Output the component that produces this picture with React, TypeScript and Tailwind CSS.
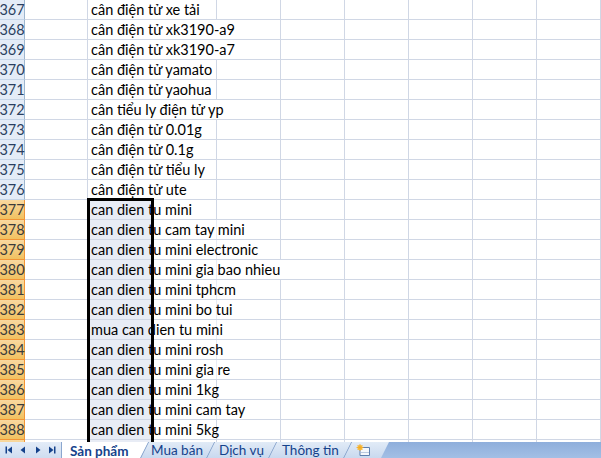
import React from 'react';

const rows: { n: number; text: string; ov?: boolean }[] = [
    { n: 367, text: 'cân điện tử xe tải' },
    { n: 368, text: 'cân điện tử xk3190-a9', ov: true },
    { n: 369, text: 'cân điện tử xk3190-a7', ov: true },
    { n: 370, text: 'cân điện tử yamato' },
    { n: 371, text: 'cân điện tử yaohua' },
    { n: 372, text: 'cân tiểu ly điện tử yp', ov: true },
    { n: 373, text: 'cân điện tử 0.01g' },
    { n: 374, text: 'cân điện tử 0.1g' },
    { n: 375, text: 'cân điện tử tiểu ly' },
    { n: 376, text: 'cân điện tử ute' },
    { n: 377, text: 'can dien tu mini' },
    { n: 378, text: 'can dien tu cam tay mini', ov: true },
    { n: 379, text: 'can dien tu mini electronic', ov: true },
    { n: 380, text: 'can dien tu mini gia bao nhieu', ov: true },
    { n: 381, text: 'can dien tu mini tphcm', ov: true },
    { n: 382, text: 'can dien tu mini bo tui', ov: true },
    { n: 383, text: 'mua can dien tu mini', ov: true },
    { n: 384, text: 'can dien tu mini rosh', ov: true },
    { n: 385, text: 'can dien tu mini gia re', ov: true },
    { n: 386, text: 'can dien tu mini 1kg' },
    { n: 387, text: 'can dien tu mini cam tay', ov: true },
    { n: 388, text: 'can dien tu mini 5kg' },
    { n: 389, text: '' },
];

const NavIcon = ({ kind }: { kind: 'first' | 'prev' | 'next' | 'last' }) => (
    <svg width="8" height="8" viewBox="0 0 8 8" className="fill-[#15428b]">
        {kind === 'first' && (<><rect x="0.5" y="0.5" width="1.5" height="7" /><polygon points="7,0.5 2.5,4 7,7.5" /></>)}
        {kind === 'prev' && <polygon points="6,0.5 1.5,4 6,7.5" />}
        {kind === 'next' && <polygon points="2,0.5 6.5,4 2,7.5" />}
        {kind === 'last' && (<><polygon points="1,0.5 5.5,4 1,7.5" /><rect x="6" y="0.5" width="1.5" height="7" /></>)}
    </svg>
);

// the "/" edge line drawn on the left side of each sheet tab
const Slash = () => (
    <svg width="9" height="16" viewBox="0 0 9 16" className="absolute left-0 top-0">
        <path d="M0.5 16L8.5 0" stroke="#7f9dc8" strokeWidth="1" />
    </svg>
);

const tabClass = 'relative -ml-[8px] bg-gradient-to-b from-[#e1ebf7] to-[#c9d9ef] text-[#15428b]';

export default function App() {
    return (
        <div className="w-[601px] h-[458px] overflow-hidden bg-white flex flex-col" style={{ fontFamily: 'Lato, "Open Sans", sans-serif' }}>
            {/* sheet grid */}
            <div className="relative h-[442px] overflow-hidden">
                {rows.map((r) => {
                    const sel = r.n >= 377;
                    return (
                        <div key={r.n} className="flex h-[20px] border-b border-[#d0d7e5]">
                            <div
                                className={
                                    sel
                                        ? 'w-[25px] shrink-0 flex items-center justify-center text-[14.5px] text-[#3b3b3b] bg-gradient-to-b from-[#f9d99f] to-[#f1c15f] border-r border-[#f29536] border-b border-b-[#f29536] -mb-px'
                                        : 'w-[25px] shrink-0 flex items-center justify-center text-[14.5px] text-[#2a3f5f] bg-[#e4ecf7] border-r border-[#9eb6ce] border-b border-b-[#c5d5e8] -mb-px'
                                }
                            >
                                {r.n}
                            </div>
                            <div className="w-[63px] shrink-0 border-r border-[#d0d7e5]" />
                            <div
                                className={
                                    (r.ov ? 'border-r-transparent ' : 'border-r-[#d0d7e5] ') +
                                    (sel
                                        ? 'bg-[linear-gradient(90deg,#e8ecf5_0,#e8ecf5_64px,transparent_64px)] '
                                        : '') +
                                    'w-[129px] shrink-0 border-r relative'
                                }
                            >
                                <span className="absolute left-[3px] top-[1px] whitespace-nowrap text-[14.5px] leading-[18px] text-black">
                                    {r.text}
                                </span>
                            </div>
                            <div className={(r.n === 380 ? 'border-r-transparent ' : 'border-r-[#d0d7e5] ') + 'w-[64px] shrink-0 border-r'} />
                            <div className="w-[64px] shrink-0 border-r border-[#d0d7e5]" />
                            <div className="w-[64px] shrink-0 border-r border-[#d0d7e5]" />
                            <div className="w-[64px] shrink-0 border-r border-[#d0d7e5]" />
                            <div className="w-[64px] shrink-0 border-r border-[#d0d7e5]" />
                            <div className="w-[64px] shrink-0 border-r border-[#d0d7e5]" />
                        </div>
                    );
                })}
                {/* selection border */}
                <div className="absolute left-[87px] top-[198px] w-[67px] h-[260px] border-[3px] border-black pointer-events-none" />
            </div>

            {/* sheet tabs */}
            <div className="h-[16px] flex items-stretch bg-gradient-to-b from-[#8eaedb] to-[#a3bfe5] text-[13.5px] leading-[16px]">
                <div className="w-[62px] shrink-0 flex items-center justify-around px-[2px] bg-gradient-to-b from-[#e3ecf8] to-[#cfddf0] border-r border-[#8ba7cf]">
                    <NavIcon kind="first" />
                    <NavIcon kind="prev" />
                    <NavIcon kind="next" />
                    <NavIcon kind="last" />
                </div>
                <div className="flex items-stretch">
                    <div className="w-[86px] pl-[8px] bg-white font-bold text-[#15428b] border-t border-white">
                        Sản phẩm
                    </div>
                    <div className={tabClass + ' w-[74px] pl-[11px] [clip-path:polygon(0_100%,8px_0,100%_0,100%_100%)]'}>
                        <Slash />
                        Mua bán
                    </div>
                    <div className={tabClass + ' w-[70px] pl-[13px] [clip-path:polygon(0_100%,8px_0,100%_0,100%_100%)]'}>
                        <Slash />
                        Dịch vụ
                    </div>
                    <div className={tabClass + ' w-[83px] pl-[14px] [clip-path:polygon(0_100%,8px_0,100%_0,100%_100%)]'}>
                        <Slash />
                        Thông tin
                    </div>
                    <div className={tabClass + ' w-[46px] pl-[13px] flex items-center [clip-path:polygon(0_100%,8px_0,100%_0,38px_100%)]'}>
                        <Slash />
                        <svg width="16" height="13" viewBox="0 0 16 13">
                            <path d="M4 3.5h9.5v8H4z" fill="#f4f7fb" stroke="#5d7fae" />
                            <path d="M5 8.5h8" stroke="#b9c9df" />
                            <circle cx="4" cy="3.5" r="2.6" fill="#f7c948" />
                            <path d="M4 0v7M0.5 3.5h7M1.5 1l5 5M6.5 1l-5 5" stroke="#f5a623" strokeWidth="0.8" />
                        </svg>
                    </div>
                </div>
            </div>
        </div>
    );
}
